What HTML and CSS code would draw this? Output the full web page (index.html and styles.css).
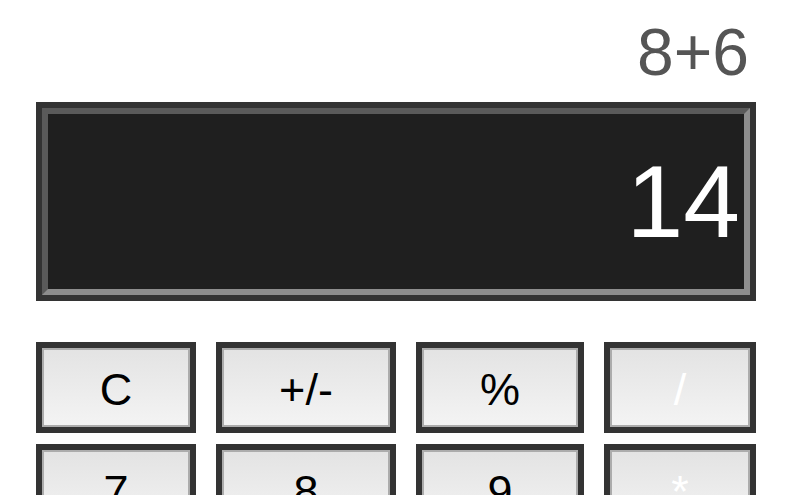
FILE: index.html
```html
<!DOCTYPE html>
<html>
<head>
<meta charset="utf-8">
<link rel="stylesheet" href="styles.css">
</head>
<body>
<div class="calc">
  <div class="history">8+6</div>
  <div class="display"><div class="screen">14</div></div>
  <div class="keys">
    <button class="key">C</button>
    <button class="key">+/-</button>
    <button class="key">%</button>
    <button class="key op">/</button>
    <button class="key">7</button>
    <button class="key">8</button>
    <button class="key">9</button>
    <button class="key op">*</button>
    <button class="key">4</button>
    <button class="key">5</button>
    <button class="key">6</button>
    <button class="key op">-</button>
    <button class="key">1</button>
    <button class="key">2</button>
    <button class="key">3</button>
    <button class="key op">+</button>
  </div>
</div>
</body>
</html>
```

FILE: styles.css
```css
html, body {
  margin: 0;
  padding: 0;
  background: #fff;
}

body {
  font-family: "Liberation Sans", Arial, Helvetica, sans-serif;
}

.calc {
  padding: 19px 34px 0 36px;
}

.history {
  font-size: 66px;
  line-height: 66px;
  height: 66px;
  color: #555;
  text-align: right;
  padding-right: 7px;
}

.display {
  margin-top: 17px;
  border: 6px solid #333;
  background: #1f1f1f;
}

.screen {
  height: 175px;
  border-style: solid;
  border-width: 6px;
  border-color: #5a5a5a #8d8d8d #8d8d8d #5a5a5a;
  display: flex;
  align-items: center;
  justify-content: flex-end;
  padding-right: 4px;
  color: #fff;
  font-size: 102px;
  line-height: 1;
}

.keys {
  margin-top: 41px;
  display: grid;
  grid-template-columns: 160px 180px 168px 152px;
  grid-auto-rows: 91px;
  column-gap: 20px;
  row-gap: 11px;
}

.key {
  box-sizing: border-box;
  margin: 0;
  padding: 0;
  border: 6px solid #333;
  box-shadow: inset 0 0 0 2px #acacac;
  background: linear-gradient(#e3e3e3, #f4f4f4);
  font-family: "Liberation Sans", Arial, Helvetica, sans-serif;
  font-size: 45px;
  color: #000;
  line-height: 1;
  padding-top: 4px;
}

.key.op {
  color: #fff;
}
```
